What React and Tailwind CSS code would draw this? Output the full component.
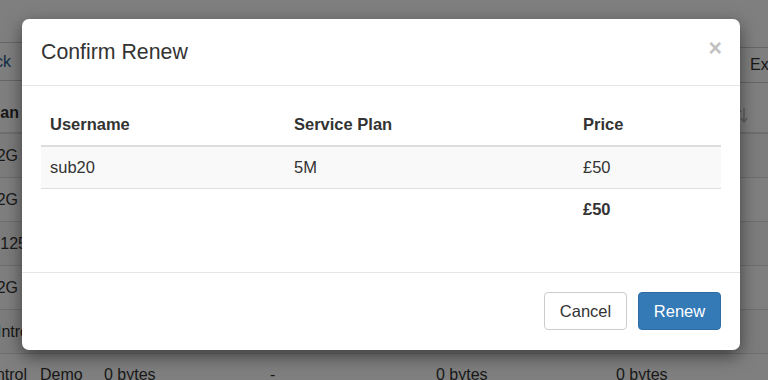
import React from 'react';

const rows = [
  { text: '2G', w: 'w-[18px]' },
  { text: '2G', w: 'w-[18px]' },
  { text: '125', w: 'w-[27px]' },
  { text: '2G', w: 'w-[18px]' },
  { text: 'Intro', w: 'w-[29px]' },
];

function PageBehind() {
  return (
    <div className="h-[380px] overflow-hidden bg-white text-[16px] text-[#333]">
      <div className="h-[42px]" />
      {/* Toolbar */}
      <div className="flex items-start justify-between h-[39px]">
        <div className="h-[39px] w-[30px] border border-l-0 border-[#ccc] rounded-r-[4px] flex items-center justify-end pr-[18px] text-[#1e5a8c] whitespace-nowrap overflow-hidden">
          Back
        </div>
        <div className="mt-[5px] h-[36px] w-[30px] border border-r-0 border-[#ccc] rounded-l-[4px] flex items-center pl-[11px] text-[#333] whitespace-nowrap overflow-hidden">
          Export
        </div>
      </div>
      {/* Table header */}
      <div className="flex items-end h-[53px] pb-[7px] border-b-2 border-[#ddd] font-bold">
        <div className="w-[19px] flex justify-end overflow-hidden whitespace-nowrap">Plan</div>
        <div className="flex-1" />
        <svg width="14" height="20" viewBox="0 0 14 20" className="mr-[20px] opacity-30">
          <path d="M4 4 L4 17 M1 7 L4 3 L7 7" stroke="#333" strokeWidth="1.6" fill="none" />
          <path d="M10 3 L10 16 M7 13 L10 17 L13 13" stroke="#333" strokeWidth="1.6" fill="none" />
        </svg>
      </div>
      {rows.map((r, i) => (
        <div key={i} className={`flex items-center h-[44px] border-b border-[#ddd] ${i % 2 === 0 ? 'bg-[#f9f9f9]' : 'bg-white'}`}>
          <div className={`${r.w} flex justify-end overflow-hidden whitespace-nowrap`}>{r.text}</div>
        </div>
      ))}
      <div className="flex items-center h-[40px] pt-[2px] whitespace-nowrap">
        <div className="w-[27px] flex justify-end overflow-hidden">Control</div>
        <div className="ml-[13px] w-[64px]">Demo</div>
        <div className="w-[166px]">0 bytes</div>
        <div className="w-[166px]">-</div>
        <div className="w-[180px]">0 bytes</div>
        <div>0 bytes</div>
      </div>
    </div>
  );
}

export default function App() {
  return (
    <div className="relative w-[768px] h-[380px] overflow-hidden font-['Liberation_Sans',Arial,sans-serif]">
      <PageBehind />
      {/* Backdrop */}
      <div className="absolute inset-0 bg-black/50" />

      {/* Modal */}
      <div className="absolute left-[22px] top-[19px] w-[718px] bg-white rounded-[7px] shadow-[0_6px_17px_rgba(0,0,0,0.5)] text-[#333] text-[16.5px]">
        <div className="h-[67px] px-[19px] flex items-center justify-between border-b border-[#e5e5e5]">
          <h4 className="text-[21.3px] leading-none pt-[1px]">Confirm Renew</h4>
          <button className="text-[#c2c2c2] font-bold text-[23px] leading-none -mt-[8px] -mr-[1px]">×</button>
        </div>

        <div className="px-[19px] pt-[17px] pb-[42px]">
          <table className="w-full border-collapse">
            <thead>
              <tr className="border-b-2 border-[#ddd]">
                <th className="w-[244px] text-left font-bold px-[9px] pt-[10px] pb-[9px] leading-[23px]">Username</th>
                <th className="w-[289px] text-left font-bold px-[9px] pt-[10px] pb-[9px] leading-[23px]">Service Plan</th>
                <th className="text-left font-bold px-[9px] pt-[10px] pb-[9px] leading-[23px]">Price</th>
              </tr>
            </thead>
            <tbody>
              <tr className="bg-[#f9f9f9] border-b border-[#ddd]">
                <td className="px-[9px] py-[9px] leading-[23px]">sub20</td>
                <td className="px-[9px] py-[9px] leading-[23px]">5M</td>
                <td className="px-[9px] py-[9px] leading-[23px]">£50</td>
              </tr>
              <tr>
                <td className="px-[9px] py-[9px] leading-[23px]" />
                <td className="px-[9px] py-[9px] leading-[23px]" />
                <td className="px-[9px] py-[9px] leading-[23px] font-bold">£50</td>
              </tr>
            </tbody>
          </table>
        </div>

        <div className="border-t border-[#e5e5e5] px-[19px] pt-[19px] pb-[20px] flex justify-end gap-[11px]">
          <button className="h-[38px] w-[83px] rounded-[4px] border border-[#ccc] bg-white text-[#333] text-[16.5px]">Cancel</button>
          <button className="h-[38px] w-[83px] rounded-[4px] border border-[#2e6da4] bg-[#337ab7] text-white text-[16.5px]">Renew</button>
        </div>
      </div>
    </div>
  );
}
